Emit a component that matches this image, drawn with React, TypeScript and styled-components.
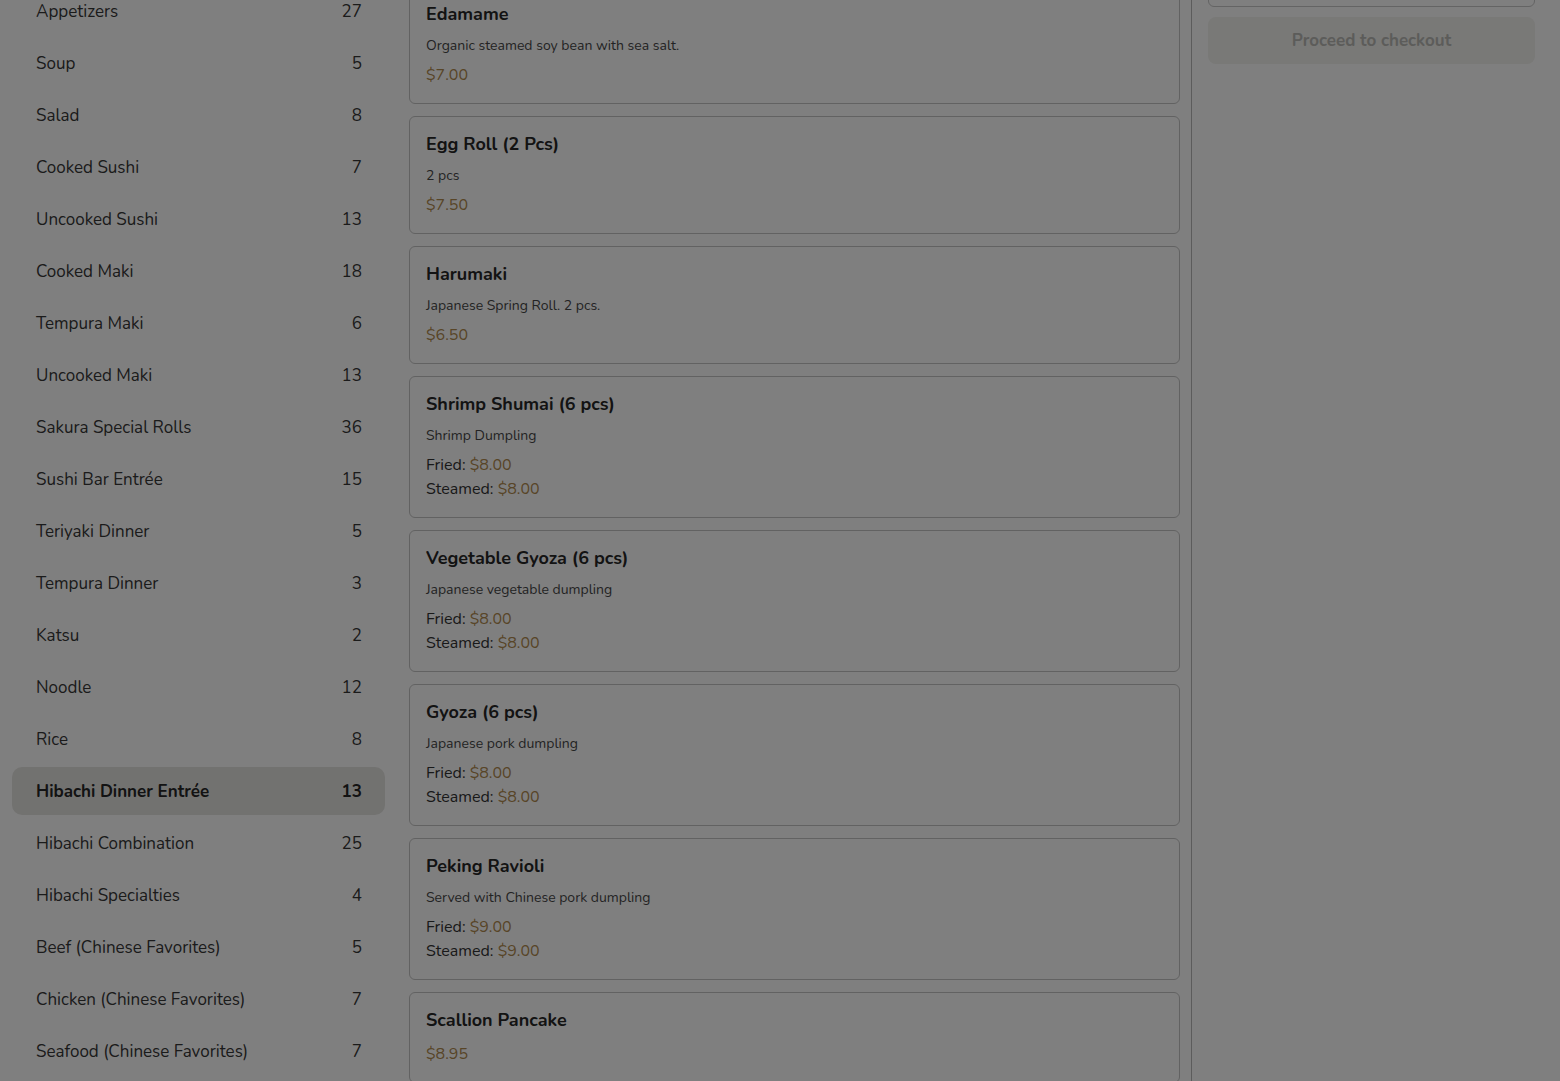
import React from "react"
import styled, { createGlobalStyle } from "styled-components"

// STYLES
const GlobalStyle = createGlobalStyle`
  html, body {
    margin: 0;
    padding: 0;
    height: 100%;
    overflow: hidden;
    background: #ffffff;
    font-family: "Nunito", "Lato", "Noto Sans", sans-serif;
    color: #333;
  }
  * { box-sizing: border-box; }
`

const Page = styled.div`
  display: grid;
  grid-template-columns: 397px 795px 1fr;
  height: 100vh;
  overflow: hidden;
`

const Sidebar = styled.aside`
  overflow: hidden;
  padding: 0 12px;
`

const CategoryList = styled.ul<{ $offset: number }>`
  list-style: none;
  margin: ${(p) => -p.$offset}px 0 0;
  padding: 0;
  display: flex;
  flex-direction: column;
  gap: 4px;
`

const CategoryRow = styled.li<{ $active?: boolean }>`
  display: flex;
  align-items: center;
  justify-content: space-between;
  height: 48px;
  padding: 0 23px 0 24px;
  border-radius: 10px;
  font-size: 17px;
  font-weight: ${(p) => (p.$active ? 700 : 400)};
  color: ${(p) => (p.$active ? "#262626" : "#363636")};
  background: ${(p) => (p.$active ? "#e5e4e1" : "transparent")};
`

const Menu = styled.main`
  overflow: hidden;
  padding: 0 11px 0 12px;
  border-right: 1px solid #b8b8b8;
`

const ItemList = styled.div<{ $offset: number }>`
  margin-top: ${(p) => -p.$offset}px;
  display: flex;
  flex-direction: column;
  gap: 12px;
`

const ItemCard = styled.article`
  display: flex;
  flex-direction: column;
  gap: 7px;
  padding: 15px 16px 16px;
  border: 1px solid #c4c4c4;
  border-radius: 6px;
  background: #fff;
`

const ItemTitle = styled.h3`
  margin: 0 0 3px;
  font-size: 18px;
  line-height: 24px;
  font-weight: 700;
  color: #262626;
`

const ItemDesc = styled.p`
  margin: 0;
  font-size: 14px;
  line-height: 20px;
  color: #474747;
`

const Prices = styled.div`
  display: flex;
  flex-direction: column;
`

const PriceLine = styled.div`
  font-size: 16px;
  line-height: 24px;
  color: #333;
`

const Price = styled.span`
  color: #b08a4e;
`

const Cart = styled.aside`
  overflow: hidden;
  padding: 0 25px 0 16px;
  display: flex;
  flex-direction: column;
  gap: 10px;
`

const CartBox = styled.div`
  height: 60px;
  margin-top: -53px;
  border: 1px solid #c8c8c8;
  border-radius: 6px;
`

const CheckoutButton = styled.button`
  height: 47px;
  padding-bottom: 2px;
  border: none;
  border-radius: 8px;
  background: #f2f2ee;
  color: #b9b9b5;
  font-family: inherit;
  font-size: 17px;
  font-weight: 700;
  cursor: not-allowed;
`

const Backdrop = styled.div`
  position: fixed;
  inset: 0;
  background: rgba(0, 0, 0, 0.5);
  z-index: 10;
`

// DATA
const categories: [string, number][] = [
  ["Appetizers", 27],
  ["Soup", 5],
  ["Salad", 8],
  ["Cooked Sushi", 7],
  ["Uncooked Sushi", 13],
  ["Cooked Maki", 18],
  ["Tempura Maki", 6],
  ["Uncooked Maki", 13],
  ["Sakura Special Rolls", 36],
  ["Sushi Bar Entrée", 15],
  ["Teriyaki Dinner", 5],
  ["Tempura Dinner", 3],
  ["Katsu", 2],
  ["Noodle", 12],
  ["Rice", 8],
  ["Hibachi Dinner Entrée", 13],
  ["Hibachi Combination", 25],
  ["Hibachi Specialties", 4],
  ["Beef (Chinese Favorites)", 5],
  ["Chicken (Chinese Favorites)", 7],
  ["Seafood (Chinese Favorites)", 7],
]

interface MenuItem {
  name: string
  desc?: string
  prices: { label?: string; value: string }[]
}

const items: MenuItem[] = [
  { name: "Edamame", desc: "Organic steamed soy bean with sea salt.", prices: [{ value: "$7.00" }] },
  { name: "Egg Roll (2 Pcs)", desc: "2 pcs", prices: [{ value: "$7.50" }] },
  { name: "Harumaki", desc: "Japanese Spring Roll. 2 pcs.", prices: [{ value: "$6.50" }] },
  {
    name: "Shrimp Shumai (6 pcs)",
    desc: "Shrimp Dumpling",
    prices: [
      { label: "Fried", value: "$8.00" },
      { label: "Steamed", value: "$8.00" },
    ],
  },
  {
    name: "Vegetable Gyoza (6 pcs)",
    desc: "Japanese vegetable dumpling",
    prices: [
      { label: "Fried", value: "$8.00" },
      { label: "Steamed", value: "$8.00" },
    ],
  },
  {
    name: "Gyoza (6 pcs)",
    desc: "Japanese pork dumpling",
    prices: [
      { label: "Fried", value: "$8.00" },
      { label: "Steamed", value: "$8.00" },
    ],
  },
  {
    name: "Peking Ravioli",
    desc: "Served with Chinese pork dumpling",
    prices: [
      { label: "Fried", value: "$9.00" },
      { label: "Steamed", value: "$9.00" },
    ],
  },
  { name: "Scallion Pancake", prices: [{ value: "$8.95" }] },
]

const ACTIVE = "Hibachi Dinner Entrée"

const App = () => {
  return (
    <>
      <GlobalStyle />
      <Page>
        <Sidebar>
          <CategoryList $offset={13}>
            {categories.map(([name, count]) => (
              <CategoryRow key={name} $active={name === ACTIVE}>
                <span>{name}</span>
                <span>{count}</span>
              </CategoryRow>
            ))}
          </CategoryList>
        </Sidebar>

        <Menu>
          <ItemList $offset={14}>
            {items.map((item) => (
              <ItemCard key={item.name}>
                <ItemTitle>{item.name}</ItemTitle>
                {item.desc && <ItemDesc>{item.desc}</ItemDesc>}
                <Prices>
                  {item.prices.map((p, i) => (
                    <PriceLine key={i}>
                      {p.label && `${p.label}: `}
                      <Price>{p.value}</Price>
                    </PriceLine>
                  ))}
                </Prices>
              </ItemCard>
            ))}
          </ItemList>
        </Menu>

        <Cart>
          <CartBox />
          <CheckoutButton disabled>Proceed to checkout</CheckoutButton>
        </Cart>
      </Page>
      <Backdrop />
    </>
  )
}

export default App
